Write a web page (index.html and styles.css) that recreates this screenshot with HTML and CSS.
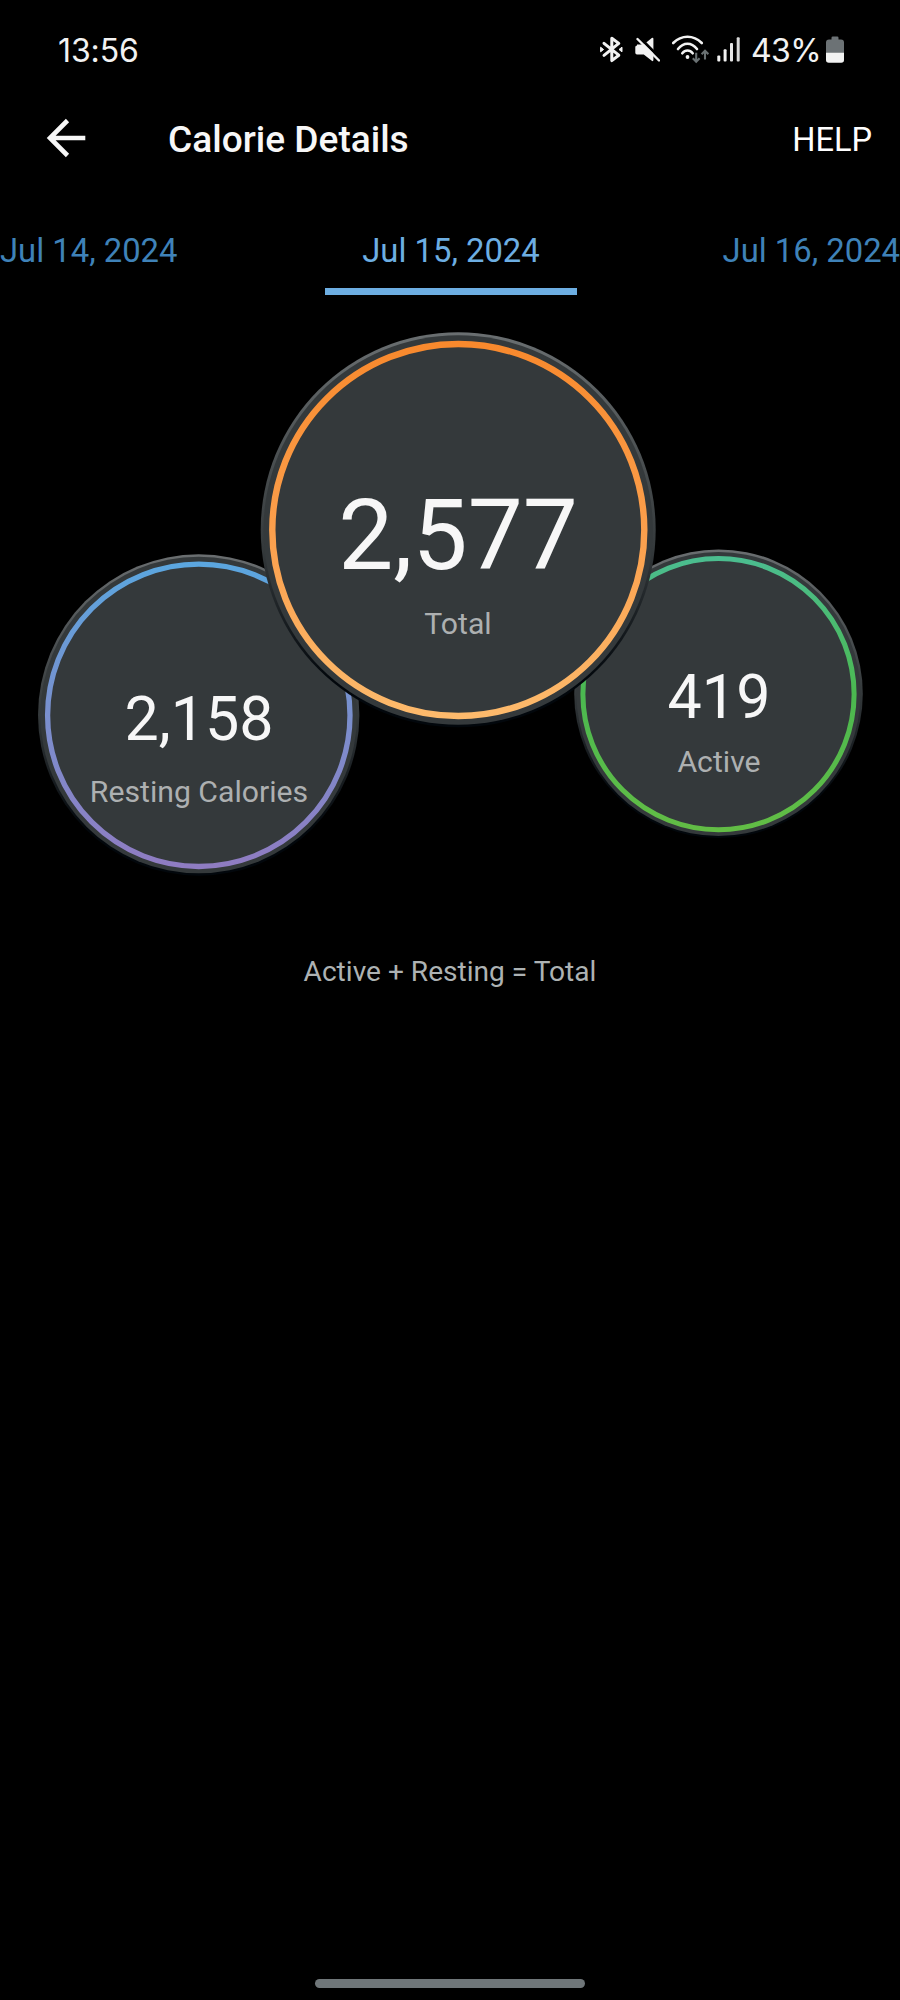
FILE: index.html
```
<!DOCTYPE html>
<html lang="en">
<head>
    <meta charset="UTF-8">
    <meta name="viewport" content="width=device-width, initial-scale=1.0">
    <title>Calorie Details</title>
    <link rel="stylesheet" href="styles.css">
</head>
<body>
    <div class="status-bar">
        <span class="clock">13:56</span>
        <div class="status-icons">
            <!-- bluetooth -->
            <svg width="24" height="30" viewBox="599 35 24 30">
                <path d="M604 43.3L618.8 55.2L611.8 60.6V38.2L618.8 43.4L604 55.4" fill="none" stroke="#f2f2f2" stroke-width="3" stroke-linejoin="round" stroke-linecap="round"/>
                <path d="M600.6 47.2v4.6l3-2.3zM622 47.2v4.6l-3-2.3z" fill="#f2f2f2" stroke="#f2f2f2" stroke-width="1" stroke-linejoin="round"/>
            </svg>
            <!-- muted -->
            <svg width="25" height="30" viewBox="635 35 25 30">
                <path d="M637 44.4h6.8l8-6.4q1.6-1 1.6 1v20.8q0 2-1.6 1l-8-6.4h-6.8q-1.7 0-1.7-1.7v-5.6q0-1.7 1.7-1.7z" fill="#f2f2f2"/>
                <path d="M638.5 36.5L662 60" stroke="#000" stroke-width="3"/>
                <path d="M637.5 39L659 60.5" stroke="#f2f2f2" stroke-width="2.4" stroke-linecap="round"/>
            </svg>
            <!-- wifi -->
            <svg class="wifi" width="38" height="30" viewBox="671 35 38 30">
                <g fill="none" stroke="#f2f2f2" stroke-width="2.6" stroke-linecap="round">
                    <path d="M673.2 43Q679.5 36.8 687.5 36.8T701.8 43"/>
                    <path d="M678 49Q682.2 43.8 687.5 43.8T697 49"/>
                    <path d="M682.3 53.3Q684.5 50.5 687.5 50.5T692.7 53.3"/>
                </g>
                <circle cx="687.5" cy="57" r="1.9" fill="#f2f2f2"/>
                <path d="M696.2 52.8V61.5M692.8 58.3L696.2 61.7L699.6 58.3M705 59.5V51M701.6 54.2L705 50.8L708.4 54.2" fill="none" stroke="#6a7173" stroke-width="2.1"/>
            </svg>
            <!-- signal -->
            <svg class="signal" width="24" height="30" viewBox="717 35 24 30">
                <rect x="717.3" y="55.5" width="3" height="6" rx="1" fill="#f2f2f2"/>
                <rect x="723.6" y="49.3" width="3" height="12.2" rx="1" fill="#f2f2f2"/>
                <rect x="730" y="43" width="3" height="18.5" rx="1" fill="#e6e6e6"/>
                <rect x="736.7" y="37.2" width="3" height="24.3" rx="1" fill="#d8d8d8"/>
            </svg>
            <span class="battery-text">43%</span>
            <!-- battery -->
            <svg width="18" height="30" viewBox="826 35 18 30">
                <path d="M831.5 38v-.2q0-1.3 1.3-1.3h4.4q1.3 0 1.3 1.3v1.7h2.5q3 0 3 3V53h-18V42.5q0-3 3-3h2.5z" fill="#6c7275"/>
                <path d="M826 52.7h18v7.3q0 2.8-2.8 2.8h-12.4q-2.8 0-2.8-2.8z" fill="#f2f2f2"/>
            </svg>
        </div>
    </div>

    <header class="app-bar">
        <svg class="back" width="40" height="40" viewBox="0 0 40 40">
            <path d="M39.3 20H4.5M21.5 2.5L4 20L21.5 37.5" fill="none" stroke="#f7f7f7" stroke-width="4.6"/>
        </svg>
        <h1>Calorie Details</h1>
        <a class="help" href="#">HELP</a>
    </header>

    <nav class="tabs">
        <a class="tab" href="#">Jul 14, 2024</a>
        <a class="tab active" href="#">Jul 15, 2024</a>
        <a class="tab" href="#">Jul 16, 2024</a>
    </nav>

    <main>
        <div class="bubbles">
            <div class="bubble resting">
                <svg class="disc" width="322" height="322">
                    <defs>
                        <linearGradient id="smallRim" x1="0" y1="0" x2="0" y2="1">
                            <stop offset="0" stop-color="#6a6e70"/>
                            <stop offset="0.5" stop-color="#34393b"/>
                            <stop offset="0.85" stop-color="#02070c"/>
                        </linearGradient>
                        <linearGradient id="restingRing" x1="0" y1="0" x2="0" y2="1">
                            <stop offset="0" stop-color="#5ba6df"/>
                            <stop offset="0.5" stop-color="#7a8fcd"/>
                            <stop offset="1" stop-color="#8f7cc2"/>
                        </linearGradient>
                    </defs>
                    <circle cx="160.7" cy="161" r="160.7" fill="url(#smallRim)"/>
                    <circle cx="160.7" cy="161" r="158.3" fill="#34393b"/>
                    <circle cx="160.8" cy="161.3" r="151.2" fill="none" stroke="url(#restingRing)" stroke-width="5.3"/>
                </svg>
                <div class="caption">
                    <div class="value">2,158</div>
                    <div class="label">Resting Calories</div>
                </div>
            </div>

            <div class="bubble total">
                <svg class="disc" width="396" height="396">
                    <defs>
                        <linearGradient id="totalRim" x1="0" y1="0" x2="0" y2="1">
                            <stop offset="0" stop-color="#6a6f71"/>
                            <stop offset="0.55" stop-color="#34393b"/>
                            <stop offset="0.88" stop-color="#02070c"/>
                        </linearGradient>
                        <linearGradient id="totalRing" x1="0" y1="0" x2="0" y2="1">
                            <stop offset="0" stop-color="#f8892d"/>
                            <stop offset="0.5" stop-color="#fb9f4c"/>
                            <stop offset="1" stop-color="#fdba6c"/>
                        </linearGradient>
                    </defs>
                    <circle cx="198.2" cy="197.7" r="197.5" fill="url(#totalRim)"/>
                    <circle cx="198.2" cy="198" r="194.7" fill="#34393b"/>
                    <circle cx="198.3" cy="198" r="186" fill="none" stroke="url(#totalRing)" stroke-width="6.4"/>
                </svg>
                <div class="caption">
                    <div class="value">2,577</div>
                    <div class="label">Total</div>
                </div>
            </div>

            <div class="bubble burned">
                <svg class="disc" width="290" height="290">
                    <defs>
                        <linearGradient id="burnedRing" x1="0" y1="0" x2="0" y2="1">
                            <stop offset="0" stop-color="#4bbd8f"/>
                            <stop offset="0.5" stop-color="#4bb950"/>
                            <stop offset="1" stop-color="#62bd45"/>
                        </linearGradient>
                    </defs>
                    <circle cx="144.5" cy="144.7" r="144.3" fill="url(#smallRim)"/>
                    <circle cx="144.5" cy="145" r="142" fill="#34393b"/>
                    <circle cx="144.5" cy="145.2" r="135.6" fill="none" stroke="url(#burnedRing)" stroke-width="5"/>
                </svg>
                <div class="caption">
                    <div class="value">419</div>
                    <div class="label">Active</div>
                </div>
            </div>
        </div>

        <p class="formula">Active + Resting = Total</p>
    </main>

    <div class="home-bar"></div>
</body>
</html>
```
FILE: styles.css
```
* {
    box-sizing: border-box;
}

body {
    margin: 0;
    width: 900px;
    height: 2000px;
    display: flex;
    flex-direction: column;
    overflow: hidden;
    background: #000;
    color: #f7f7f7;
    font-family: Roboto, "Liberation Sans", sans-serif;
}

a {
    color: inherit;
    text-decoration: none;
}

svg {
    display: block;
    flex: none;
}

/* Phone status bar */
.status-bar {
    height: 100px;
    padding: 0 56px 0 58px;
    display: flex;
    justify-content: space-between;
    align-items: center;
    font-family: Inter, sans-serif;
    font-size: 32px;
    color: #f2f2f2;
}

.clock {
    letter-spacing: -0.1px;
}

.status-icons {
    display: flex;
    align-items: center;
    gap: 12px;
}

.wifi {
    margin-left: -1px;
}

.signal {
    margin-left: -4px;
}

.battery-text {
    width: 69px;
    margin: 0 -6px 0 -2px;
    letter-spacing: -0.6px;
    white-space: nowrap;
}

/* App bar */
.app-bar {
    height: 76px;
    padding: 0 28px 0 46px;
    display: flex;
    align-items: center;
}

.app-bar h1 {
    margin: 2px 0 0 82px;
    flex: 1;
    font-size: 37.1px;
    font-weight: 500;
}

.help {
    margin-top: 3px;
    font-size: 32.6px;
    color: #fff;
}

/* Date tabs */
.tabs {
    margin-top: 38px;
    display: flex;
    justify-content: space-between;
}

.tab {
    border-bottom: 7px solid transparent;
    font-size: 32.8px;
    line-height: 74px;
    color: #3f82b8;
}

.tab.active {
    width: 252px;
    margin-left: 2px;
    text-align: center;
    color: #6daee2;
    border-color: #6daee2;
}

/* Overlapping bubbles, the total sits on top */
.bubbles {
    display: flex;
    align-items: flex-start;
    padding-left: 38px;
}

.bubble {
    display: grid;
    flex: none;
    text-align: center;
}

.disc,
.caption {
    grid-area: 1 / 1;
}

.caption {
    position: relative;
}

.value {
    font-size: 61px;
    line-height: 64px;
}

.label {
    font-size: 30.2px;
    line-height: 40px;
    color: #adb0b1;
}

.resting {
    margin-top: 259px;
}

.resting .caption {
    padding-top: 133px;
}

.resting .label {
    margin-top: 21px;
}

.total {
    position: relative;
    z-index: 1;
    margin: 37px 0 0 -100px;
}

.total .caption {
    padding-top: 154px;
}

.total .value {
    font-size: 98px;
    line-height: 100px;
}

.total .label {
    margin-top: 18px;
}

.burned {
    margin: 254px 0 0 -82px;
}

.burned .caption {
    padding-top: 116px;
}

.burned .label {
    margin-top: 13px;
}

.formula {
    margin: 76px 0 0;
    font-size: 28.1px;
    line-height: 40px;
    text-align: center;
    color: #adb2b3;
}

/* Gesture handle */
.home-bar {
    width: 270px;
    height: 9px;
    margin: auto auto 12px;
    border-radius: 5px;
    background: #6f7679;
}
```
